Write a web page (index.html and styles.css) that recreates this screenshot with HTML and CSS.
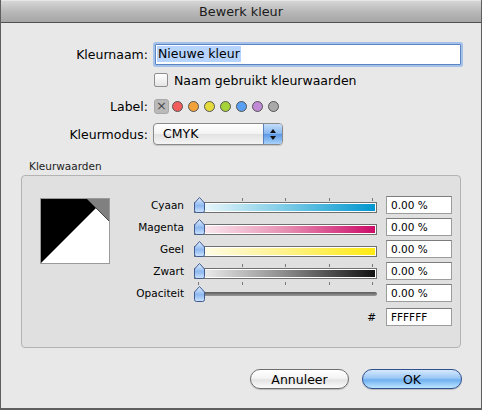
FILE: index.html
```html
<!DOCTYPE html>
<html lang="nl">
<head>
    <meta charset="UTF-8">
    <title>Bewerk kleur</title>
    <link rel="stylesheet" href="styles.css">
</head>
<body>
    <div class="window">
        <div class="titlebar">Bewerk kleur</div>

        <div class="content">
            <div class="form">
                <div class="row row-name">
                    <span class="label">Kleurnaam:</span>
                    <div class="name-field"><span class="selected">Nieuwe kleur</span></div>
                </div>
                <div class="row">
                    <span class="label"></span>
                    <div class="check"><span class="check-box"></span>Naam gebruikt kleurwaarden</div>
                </div>
                <div class="row">
                    <span class="label">Label:</span>
                    <div class="labels">
                        <span class="no-label">&times;</span>
                        <span class="dot red"></span>
                        <span class="dot orange"></span>
                        <span class="dot yellow"></span>
                        <span class="dot green"></span>
                        <span class="dot blue"></span>
                        <span class="dot purple"></span>
                        <span class="dot gray"></span>
                    </div>
                </div>
                <div class="row row-mode">
                    <span class="label">Kleurmodus:</span>
                    <div class="popup">
                        <span class="popup-text">CMYK</span>
                        <span class="stepper">
                            <svg width="8" height="13" viewBox="0 0 8 13"><path d="M4 1 L7 5 H1 Z M4 12 L1 8 H7 Z" fill="#111"/></svg>
                        </span>
                    </div>
                </div>
            </div>

            <div class="group-title">Kleurwaarden</div>
            <div class="group">
                <div class="preview">
                    <svg width="68" height="64" viewBox="0 0 68 64">
                        <rect width="68" height="64" fill="#fff"/>
                        <polygon points="0,0 46,0 55,9 0,64" fill="#000"/>
                        <polygon points="46,0 68,0 68,22" fill="#808080"/>
                        <line x1="46" y1="0" x2="68" y2="22" stroke="#444" stroke-width="1"/>
                    </svg>
                </div>

                <div class="sliders">
                    <span class="s-label">Cyaan</span>
                    <div class="slider">
                        <div class="ticks"><i></i><i></i><i></i><i></i><i></i></div>
                        <div class="bar cyan"></div>
                        <span class="knob"></span>
                    </div>
                    <div class="value">0.00 %</div>

                    <span class="s-label">Magenta</span>
                    <div class="slider">
                        <div class="ticks empty"></div>
                        <div class="bar magenta"></div>
                        <span class="knob"></span>
                    </div>
                    <div class="value">0.00 %</div>

                    <span class="s-label">Geel</span>
                    <div class="slider">
                        <div class="ticks empty"></div>
                        <div class="bar yellow"></div>
                        <span class="knob"></span>
                    </div>
                    <div class="value">0.00 %</div>

                    <span class="s-label">Zwart</span>
                    <div class="slider">
                        <div class="ticks"><i></i><i></i><i></i><i></i><i></i></div>
                        <div class="bar black"></div>
                        <span class="knob"></span>
                    </div>
                    <div class="value">0.00 %</div>

                    <span class="s-label">Opaciteit</span>
                    <div class="slider opacity">
                        <div class="ticks"><i></i><i></i><i></i><i></i><i></i></div>
                        <div class="line"></div>
                        <span class="knob"></span>
                    </div>
                    <div class="value">0.00 %</div>

                    <span class="s-label hex-row"></span>
                    <span class="hash hex-row">#</span>
                    <div class="value hex-row">FFFFFF</div>
                </div>
            </div>

            <div class="buttons">
                <button class="btn">Annuleer</button>
                <button class="btn ok">OK</button>
            </div>
        </div>
    </div>
</body>
</html>
```

FILE: styles.css
```css
* {
    margin: 0;
    padding: 0;
    box-sizing: border-box;
    font-family: "DejaVu Sans", Verdana, sans-serif;
}

body {
    background-color: #e8e8e8;
    width: 482px;
    height: 410px;
    overflow: hidden;
}

.window {
    width: 482px;
    height: 410px;
    border-left: 1px solid #5e5e5e;
    border-right: 1px solid #5e5e5e;
    border-bottom: 2px solid #5e5e5e;
    background-color: #e8e8e8;
}

.titlebar {
    height: 23px;
    line-height: 22px;
    text-align: center;
    font-size: 12.8px;
    color: #1a1a1a;
    background: linear-gradient(#d6d6d6, #b9b9b9 50%, #a6a6a6);
    border-top: 1px solid #e6e6e6;
    border-bottom: 1px solid #505050;
}

.content {
    font-size: 12.5px;
    color: #000;
}

/* top form */
.form {
    padding-top: 19px;
}

.row {
    display: grid;
    grid-template-columns: 147px 1fr;
    column-gap: 5px;
    align-items: center;
    height: 26px;
}

.row-name {
    height: 25px;
}

.row-mode {
    height: 22px;
    margin-top: 4px;
}

.label {
    text-align: right;
}

.name-field {
    margin-left: 2px;
    width: 306px;
    height: 21px;
    background-color: #fff;
    border: 1px solid #5c86c2;
    box-shadow: 0 0 0 2px #a4c2e9;
    padding: 1px 0 0 1px;
    border-radius: 1px;
}

.selected {
    display: inline-block;
    background-color: #b6d4fd;
    height: 16px;
    line-height: 16px;
    padding: 0 1px;
}

.check {
    display: flex;
    align-items: center;
    gap: 6px;
    margin-left: 1px;
}

.check-box {
    width: 14px;
    height: 14px;
    border: 1px solid #8e8e8e;
    border-radius: 2px;
    background: linear-gradient(#fff, #f2f2f2 50%, #e4e4e4);
}

.labels {
    display: flex;
    align-items: center;
    gap: 5px;
    margin-left: 1px;
}

.no-label {
    width: 15px;
    height: 15px;
    border-radius: 3px;
    background-color: #bababa;
    border: 1px solid #a8a8a8;
    color: #4a4a4a;
    font-size: 13px;
    line-height: 12px;
    text-align: center;
    margin-right: -2px;
}

.dot {
    width: 11px;
    height: 11px;
    border-radius: 50%;
    border: 1px solid #555;
}

.dot.red { background-color: #f35c5c; }
.dot.orange { background-color: #f3a23a; }
.dot.yellow { background-color: #e4da3a; }
.dot.green { background-color: #a6d23a; }
.dot.blue { background-color: #5aa0f2; }
.dot.purple { background-color: #c08ad6; }
.dot.gray { background-color: #a9a9a9; }

.popup {
    width: 130px;
    height: 22px;
    display: flex;
    border: 1px solid #8a8a8a;
    border-radius: 4px;
    background: linear-gradient(#ffffff, #f3f3f3 50%, #e2e2e2 51%, #f4f4f4);
    box-shadow: 0 1px 1px rgba(0, 0, 0, 0.15);
    overflow: hidden;
}

.popup-text {
    flex: 1;
    padding-left: 9px;
    line-height: 20px;
}

.stepper {
    width: 19px;
    display: flex;
    align-items: center;
    justify-content: center;
    border-left: 1px solid #5b7fb8;
    background: linear-gradient(#c4defa, #84b5ef 50%, #5c98e6 51%, #a8d2fa);
}

/* colour values group */
.group-title {
    font-size: 10.5px;
    line-height: 13px;
    margin-top: 15px;
    padding-left: 28px;
    color: #222;
}

.group {
    margin: 2px 0 0 20px;
    width: 440px;
    height: 173px;
    border: 1px solid #b3b3b3;
    border-radius: 4px;
    background-color: #e0e0e0;
    display: flex;
    align-items: flex-start;
}

.preview {
    margin: 22px 0 0 18px;
    width: 70px;
    height: 66px;
    border: 1px solid #9a9a9a;
}

.preview svg {
    display: block;
}

.sliders {
    margin-top: 18px;
    display: grid;
    grid-template-columns: 74px 183px 65px;
    grid-auto-rows: 22px;
    column-gap: 10px;
    align-items: center;
    font-size: 10.5px;
}

.sliders .value {
    margin-left: -1px;
}

.s-label {
    text-align: right;
}

.slider {
    position: relative;
    height: 22px;
    padding-top: 4px;
}

.ticks {
    height: 4px;
    margin: 0 4px;
    display: flex;
    justify-content: space-between;
}

.ticks i {
    width: 1px;
    height: 3px;
    background-color: #7a7a7a;
}

.bar {
    height: 11px;
    border: 1px solid #6f6f6f;
    box-shadow: inset 0 0 0 1px #fff;
}

.bar.cyan { background: linear-gradient(to right, #f4fbfd, #7ccbe6 50%, #0096cf); }
.bar.magenta { background: linear-gradient(to right, #fdf2f5, #e68fb2 50%, #cc0a68); }
.bar.yellow { background: linear-gradient(to right, #fffdf0, #fff28a 50%, #ffea10); }
.bar.black { background: linear-gradient(to right, #f6f6f6, #8a8a8a 50%, #111); }

.slider.opacity {
    padding-top: 0;
}

.line {
    margin-top: 6px;
    height: 4px;
    border-radius: 2px;
    background: linear-gradient(#5a5a5a, #9a9a9a);
}

.knob {
    position: absolute;
    left: 0;
    top: 3px;
    width: 11px;
    height: 16px;
    background: url("data:image/svg+xml,%3Csvg xmlns='http://www.w3.org/2000/svg' width='11' height='16'%3E%3Cdefs%3E%3ClinearGradient id='g' x1='0' y1='0' x2='0' y2='1'%3E%3Cstop offset='0' stop-color='%23e4efff'/%3E%3Cstop offset='0.55' stop-color='%238db8ef'/%3E%3Cstop offset='1' stop-color='%23cfe4ff'/%3E%3C/linearGradient%3E%3C/defs%3E%3Cpath d='M5.5 0.5 L10.5 6 V13.5 Q10.5 15.5 8.5 15.5 H2.5 Q0.5 15.5 0.5 13.5 V6 Z' fill='url(%23g)' stroke='%23405c8f'/%3E%3C/svg%3E") no-repeat;
}

.slider.opacity .knob {
    top: 4px;
}

.hex-row {
    margin-top: 4px;
}

.hash {
    text-align: right;
    padding-right: 1px;
}

.value {
    height: 18px;
    line-height: 16px;
    background-color: #fff;
    border: 1px solid #9c9c9c;
    border-top-color: #7c7c7c;
    padding-left: 4px;
}

/* buttons */
.buttons {
    display: flex;
    justify-content: flex-end;
    gap: 13px;
    padding-right: 19px;
    margin-top: 21px;
}

.btn {
    width: 99px;
    height: 20px;
    border-radius: 10px;
    border: 1px solid #6e6e6e;
    font-size: 12.5px;
    color: #000;
    background: linear-gradient(#ffffff, #f4f4f4 45%, #e3e3e3 55%, #fbfbfb);
    box-shadow: 0 1px 1px rgba(0, 0, 0, 0.2);
}

.btn.ok {
    width: 100px;
    border-color: #2f4f8f;
    background: linear-gradient(#d6e9fd, #9cc8f5 45%, #6fb0f0 55%, #bde6ff);
}
```
